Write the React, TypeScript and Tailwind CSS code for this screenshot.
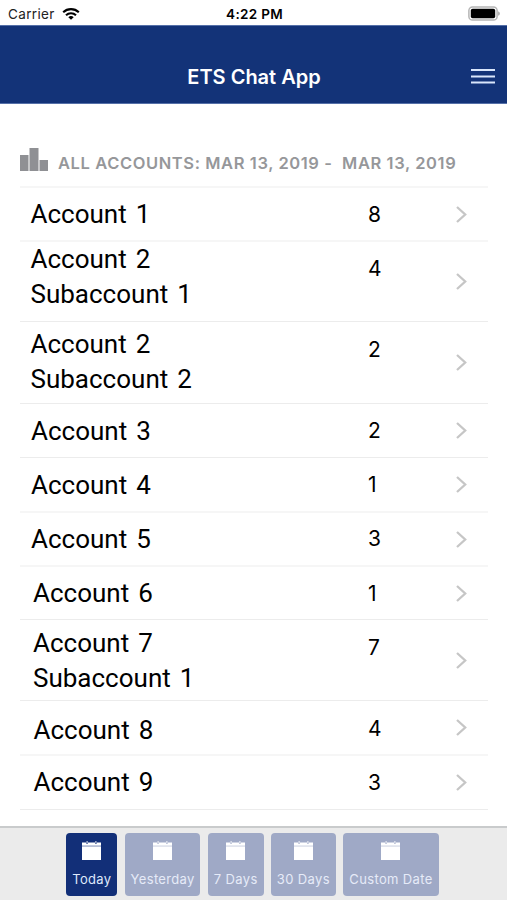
interface AccountRow {
  lines: string[];
  count: number;
  row: string;
  name: string;
  value: string;
}

const SOFT = 'border-b-2 border-[#f6f6f6]';
const THIN = 'border-b border-[#ececec]';

const accounts: AccountRow[] = [
  { lines: ['Account 1'], count: 8, row: `h-[54px] ${SOFT}`, name: 'pl-[10.5px] pt-[9px]', value: 'pt-[13px]' },
  { lines: ['Account 2', 'Subaccount 1'], count: 4, row: `h-[80px] ${THIN}`, name: 'pl-[10.5px] pt-0', value: 'pt-[13px]' },
  { lines: ['Account 2', 'Subaccount 2'], count: 2, row: `h-[82px] ${THIN}`, name: 'pl-[10.5px] pt-[5px]', value: 'pt-[14px]' },
  { lines: ['Account 3'], count: 2, row: `h-[54px] ${THIN}`, name: 'pl-[11px] pt-[10px]', value: 'pt-[13px]' },
  { lines: ['Account 4'], count: 1, row: `h-[55px] ${SOFT}`, name: 'pl-[11px] pt-[10px]', value: 'pt-[13px]' },
  { lines: ['Account 5'], count: 3, row: `h-[54px] ${SOFT}`, name: 'pl-[11px] pt-[9px]', value: 'pt-[12px]' },
  { lines: ['Account 6'], count: 1, row: `h-[53px] ${THIN}`, name: 'pl-[13px] pt-[9px]', value: 'pt-[13px]' },
  { lines: ['Account 7', 'Subaccount 1'], count: 7, row: `h-[81px] ${THIN}`, name: 'pl-[13px] pt-[6px]', value: 'pt-[14px]' },
  { lines: ['Account 8'], count: 4, row: `h-[55px] ${SOFT}`, name: 'pl-[13.5px] pt-[12px]', value: 'pt-[14px]' },
  { lines: ['Account 9'], count: 3, row: `h-[54px] ${THIN}`, name: 'pl-[13.5px] pt-[9px]', value: 'pt-[13px]' },
];

const tabs = [
  { label: 'Today', size: 'w-[51px]', active: true },
  { label: 'Yesterday', size: 'w-[75.5px]', active: false },
  { label: '7 Days', size: 'w-[55.5px]', active: false },
  { label: '30 Days', size: 'w-[64.5px]', active: false },
  { label: 'Custom Date', size: 'w-[95.5px]', active: false },
];

function WifiIcon() {
  return (
    <svg className="ml-[7px] h-3 w-[18px]" viewBox="0 0 18 12" fill="none" stroke="#000" strokeWidth="2.1">
      <path d="M1.2 4.3a11.2 11.2 0 0 1 15.6 0" />
      <path d="M4 7.2a7.2 7.2 0 0 1 10 0" />
      <path d="M9 11.8 6.3 9.2a4 4 0 0 1 5.4 0z" fill="#000" stroke="none" />
    </svg>
  );
}

function BatteryIcon() {
  return (
    <svg className="h-[15px] w-8" viewBox="0 0 32 15">
      <rect x="0.9" y="0.9" width="28.2" height="13.2" rx="3.6" fill="#fff" stroke="#b5b5b5" strokeWidth="1.5" />
      <rect x="2.8" y="2.8" width="24.4" height="9.4" rx="1.8" fill="#000" />
      <path d="M30.4 5.2c1.6.7 1.6 3.9 0 4.6z" fill="#8a8a8a" />
    </svg>
  );
}

function CalendarIcon() {
  return (
    <svg className="h-[19px] w-[19px]" viewBox="0 0 19 19">
      <path d="M0 1.5h4.2c0 2 1.8 2 1.8 0h7c0 2 1.8 2 1.8 0H19v3.3H0z" fill="#fff" />
      <path d="M0 5.3h19V19H0z" fill="#fff" />
      <path d="M5.1 0v2.4M13.9 0v2.4" stroke="#fff" strokeWidth="0.9" />
    </svg>
  );
}

function Chevron() {
  return (
    <svg className="h-[17px] w-[11px]" viewBox="0 0 11 17" fill="none" stroke="#c6c6c6" strokeWidth="2.3">
      <path d="M1 1 9.2 8.500 1 16" />
    </svg>
  );
}

export default function App() {
  return (
    <div className="flex h-[900px] w-[507px] flex-col overflow-hidden bg-white font-['Inter',sans-serif] text-black">
      {/* Status bar */}
      <div className="grid h-[25px] grid-cols-[1fr_auto_1fr] items-center pl-2 pr-[7px] pt-[2px] text-[13.5px] leading-4">
        <div className="flex items-center text-[#222]">
          <span className="tracking-[0.35px]">Carrier</span>
          <WifiIcon />
        </div>
        <span className="pl-px text-center text-[13.5px] font-semibold tracking-[0.3px]">4:22 PM</span>
        <div className="flex justify-end">
          <BatteryIcon />
        </div>
      </div>

      {/* Header */}
      <header className="grid h-[79px] grid-cols-[1fr_auto_1fr] items-center border-y border-[#5570a8] bg-[#133378] pr-3 pt-[23px]">
        <span />
        <h1 className="pl-[13px] pt-px text-[20px] font-semibold leading-6 text-white">ETS Chat App</h1>
        <svg className="h-[15px] w-6 justify-self-end" viewBox="0 0 24 15" stroke="#d9e6fb" strokeWidth="2">
          <path d="M0 1h24M0 7.5h24M0 13.5h24" />
        </svg>
      </header>

      <main className="flex-1 pl-5 pr-[19px]">
        <div className="flex h-[82px] items-end pb-3">
          <svg className="mb-[3px] h-6 w-7" viewBox="0 0 28 24" fill="#8f9094">
            <path d="M0 8h8.5v16H0zM9.5 1h9v23h-9zM19.5 13H28v11h-8.5z" />
          </svg>
          <h2 className="ml-[10px] whitespace-pre text-[16.5px] font-semibold leading-[22px] tracking-[0.6px] text-[#96979a]">
            {'ALL ACCOUNTS: MAR 13, 2019 -  MAR 13, 2019'}
          </h2>
        </div>

        <ul className="border-t-2 border-[#f6f6f6]">
          {accounts.map((account, i) => (
            <li key={i} className={`flex ${account.row}`}>
              <div
                className={`w-[348px] font-['Roboto',sans-serif] text-[26px] leading-[34.5px] [word-spacing:2.5px] ${account.name}`}
              >
                {account.lines.map((line) => (
                  <p key={line}>{line}</p>
                ))}
              </div>
              <span className={`w-[88px] text-[21px] leading-7 ${account.value}`}>{account.count}</span>
              <span className="flex items-center">
                <Chevron />
              </span>
            </li>
          ))}
        </ul>
      </main>

      {/* Date range tabs */}
      <nav className="flex h-[74px] justify-center gap-[7.6px] border-t-2 border-[#c9cbcc] bg-[#ebebeb] pr-[2px] pt-[5px]">
        {tabs.map((tab) => (
          <button
            key={tab.label}
            className={`flex h-[63px] flex-col items-center rounded-[4px] pt-2 text-[13px] leading-4 tracking-[0.35px] ${tab.size} ${
              tab.active ? 'bg-[#122f78] text-[#dfe8fb]' : 'bg-[#9fa9c6] text-[#e6ebf8]'
            }`}
          >
            <CalendarIcon />
            <span className="mt-[11px] whitespace-nowrap">{tab.label}</span>
          </button>
        ))}
      </nav>
    </div>
  );
}
